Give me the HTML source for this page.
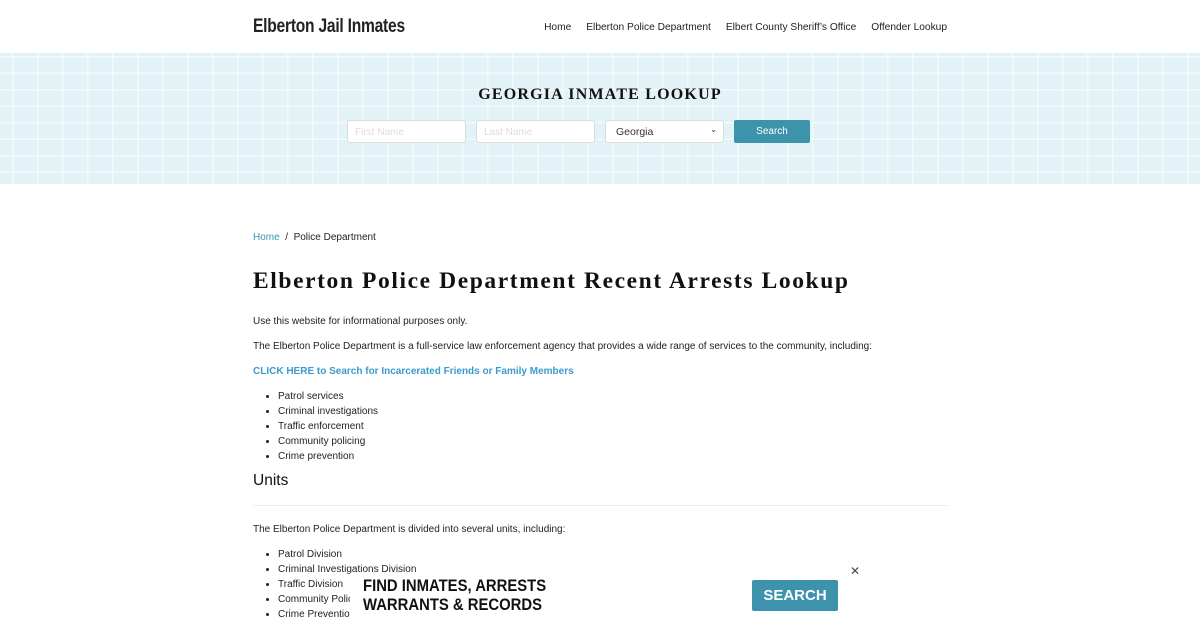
<!DOCTYPE html>
<html><head><meta charset="utf-8">
<style>
*{box-sizing:border-box;margin:0;padding:0}
body{width:1200px;height:620px;overflow:hidden;background:#fff;font-family:"Liberation Sans",sans-serif;color:#222;position:relative}
.hdr{height:53px;position:relative}
.logo{position:absolute;left:253px;top:15px;font-weight:bold;font-size:19.5px;color:#222;letter-spacing:-0.3px;transform:scaleX(0.8);transform-origin:left}
.nav{position:absolute;right:253px;top:22px;font-size:10.2px;color:#222}
.nav span{margin-left:15px}
.hero{position:absolute;top:53px;left:0;width:1200px;height:131px;background-color:#e3f2f7;
background-image:linear-gradient(90deg,rgba(255,255,255,.55) 1.5px,transparent 1.5px),linear-gradient(rgba(255,255,255,.55) 1.5px,transparent 1.5px);background-size:25px 16.5px;background-position:12px 3px}
.hero h2{position:absolute;top:33px;width:100%;text-align:center;font-family:"Liberation Serif",serif;font-weight:bold;font-size:16px;letter-spacing:1.2px;color:#111}
.inp{position:absolute;top:67px;height:23px;width:119px;background:#fff;border:1px solid #d8dde0;border-radius:3px;font-size:10px;color:#ddd;padding:6px 7px}
.btn{position:absolute;top:67px;left:734px;width:76px;height:23px;background:#3c93ab;border-radius:2px;color:#fff;font-size:10px;text-align:center;line-height:23px}
.main{position:absolute;left:253px;top:230px;width:695px;font-size:10px;line-height:15px}
.bc a{color:#3a93b0;text-decoration:none}
h1{font-family:"Liberation Serif",serif;font-weight:bold;font-size:23.5px;letter-spacing:1.6px;margin-top:21px;color:#111;line-height:30px}
ul{margin-left:25px}
h3{font-size:15.5px;font-weight:normal;color:#111;line-height:20px}
.ad{position:absolute;left:350px;top:573px;width:520px;height:47px;background:#fff}
.ad .t{position:absolute;left:13px;top:4px;font-size:16.5px;line-height:19px;color:#111;font-weight:bold;transform:scaleX(0.9);transform-origin:left}
.ad .b{position:absolute;left:402px;top:7px;width:86px;height:31px;background:#3c93ab;border-radius:2px;color:#fff;font-weight:bold;font-size:15px;text-align:center;line-height:31px}
.ad .x{position:absolute;left:500px;top:-9px;font-size:12px;color:#444}
</style></head><body>
<div class="hdr">
<div class="logo">Elberton Jail Inmates</div>
<div class="nav"><span>Home</span><span>Elberton Police Department</span><span>Elbert County Sheriff’s Office</span><span>Offender Lookup</span></div>
</div>
<div class="hero">
<h2>GEORGIA INMATE LOOKUP</h2>
<div class="inp" style="left:347px">First Name</div>
<div class="inp" style="left:476px">Last Name</div>
<div class="inp" style="left:605px;color:#333;font-size:10.5px;padding:5px 10px">Georgia<span style="position:absolute;right:6px;top:4px;font-size:8px">&#8964;</span></div>
<div class="btn">Search</div>
</div>
<div class="main">
<div class="bc"><a>Home</a> &nbsp;/&nbsp; Police Department</div>
<h1>Elberton Police Department Recent Arrests Lookup</h1>
<p style="margin-top:18px">Use this website for informational purposes only.</p>
<p style="margin-top:10px">The Elberton Police Department is a full-service law enforcement agency that provides a wide range of services to the community, including:</p>
<p style="margin-top:10px;color:#3a9bcc;font-weight:bold">CLICK HERE to Search for Incarcerated Friends or Family Members</p>
<ul style="margin-top:10px"><li>Patrol services</li><li>Criminal investigations</li><li>Traffic enforcement</li><li>Community policing</li><li>Crime prevention</li></ul>
<h3 style="margin-top:7px">Units</h3>
<div style="border-top:1px solid #eee;margin-top:14px"></div>
<p style="margin-top:16px">The Elberton Police Department is divided into several units, including:</p>
<ul style="margin-top:10px"><li>Patrol Division</li><li>Criminal Investigations Division</li><li>Traffic Division</li><li>Community Policing</li><li>Crime Prevention</li></ul>
</div>
<div class="ad">
<div class="t">FIND INMATES, ARRESTS<br>WARRANTS &amp; RECORDS</div>
<div class="b">SEARCH</div>
<div class="x">✕</div>
</div>
</body></html>
